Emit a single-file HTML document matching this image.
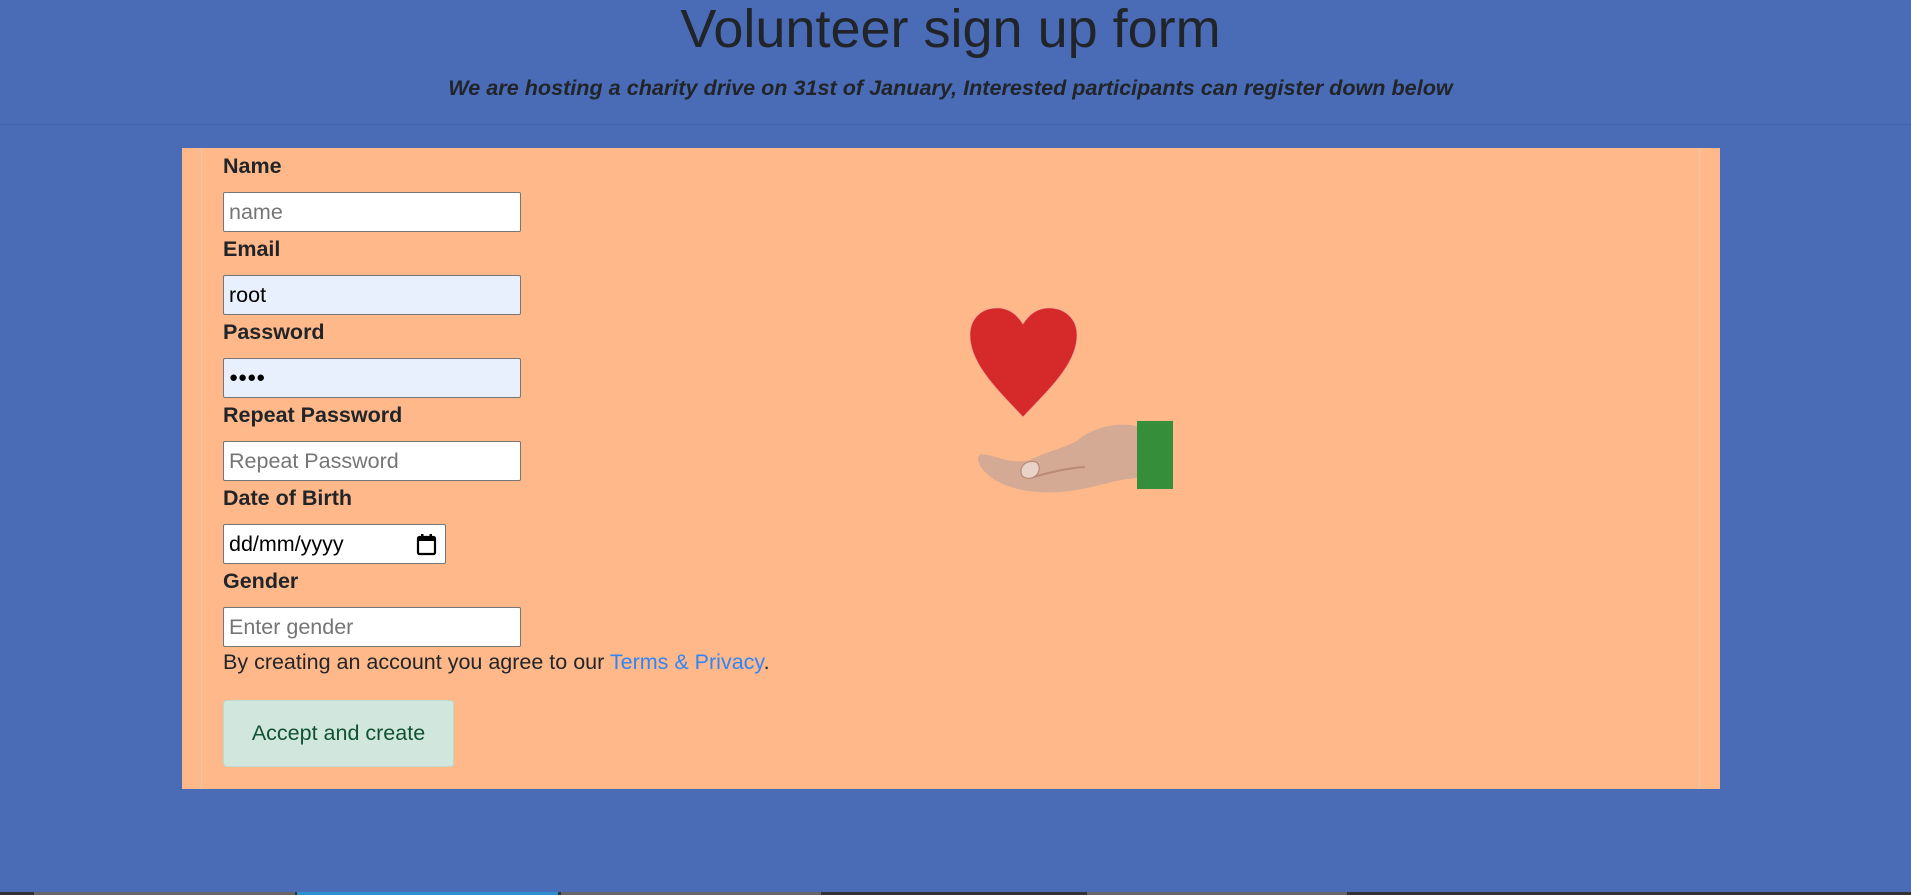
<!DOCTYPE html>
<html><head><meta charset="utf-8"><style>
*{box-sizing:border-box;margin:0;padding:0}
body{width:1911px;height:895px;background:#4a6bb5;font-family:"Liberation Sans",sans-serif;color:#212529;position:relative;overflow:hidden}
.a{position:absolute}
h1{position:absolute;left:0;width:1901px;top:-2px;text-align:center;font-weight:400;font-size:54px;line-height:62px;color:#212529}
.sub{left:0;width:1901px;top:75px;text-align:center;font-style:italic;font-weight:700;font-size:21.6px}
.hr{left:0;width:1911px;top:124px;height:1px;background:#4263a8}
.box{left:182px;top:148px;width:1538px;height:641px;background:#ffb88a}
.vl{top:148px;width:1px;height:641px;background:#e8c7b0}
label{position:absolute;left:223px;font-weight:700;font-size:21.5px;margin-top:1px}
.in{position:absolute;left:223px;width:298px;height:40px;border:1px solid #767676;border-radius:2px;background:#fff;font-size:21.5px;padding-left:5px;line-height:38px;color:#757575}
.af{background:#e8f0fe;color:#000}
.btn{left:223px;top:700px;width:231px;height:67px;background:#d1e7dd;border:1px solid #badbcc;border-radius:4px;color:#0f5132;font-size:21.5px;text-align:center;line-height:65px}
.tb{top:892px;height:3px}
</style></head><body>
<h1>Volunteer sign up form</h1>
<div class="a sub">We are hosting a charity drive on 31st of January, Interested participants can register down below</div>
<div class="a hr"></div>
<div class="a box"></div>
<div class="a vl" style="left:201px"></div>
<div class="a vl" style="left:1699px"></div>
<label style="top:153px">Name</label>
<div class="in" style="top:192px">name</div>
<label style="top:236px">Email</label>
<div class="in af" style="top:275px">root</div>
<label style="top:319px">Password</label>
<div class="in af" style="top:358px;font-size:15px">●●●●</div>
<label style="top:402px">Repeat Password</label>
<div class="in" style="top:441px">Repeat Password</div>
<label style="top:485px">Date of Birth</label>
<div class="in" style="top:524px;width:223px;color:#000">dd/mm/yyyy
<svg class="a" style="left:192px;top:8px" width="22" height="24" viewBox="0 0 22 24"><rect x="2" y="4" width="17" height="17" rx="1.5" fill="none" stroke="#000" stroke-width="2.2"/><rect x="2" y="4" width="17" height="4" fill="#000"/><rect x="5" y="1" width="2.5" height="4" fill="#000"/><rect x="13.5" y="1" width="2.5" height="4" fill="#000"/></svg></div>
<label style="top:568px">Gender</label>
<div class="in" style="top:607px">Enter gender</div>
<div class="a" style="left:223px;top:650px;font-size:21.5px">By creating an account you agree to our <span style="color:#2f86f6">Terms &amp; Privacy</span>.</div>
<div class="a btn">Accept and create</div>
<svg class="a" style="left:960px;top:300px" width="220" height="200" viewBox="960 300 220 200">
<path d="M1023 417 C1000 392 970 365 970 335 C970 318 982 308 997 308 C1010 308 1018 316 1023 324 C1028 316 1036 308 1049 308 C1064 308 1077 318 1077 335 C1077 365 1046 392 1023 417 Z" fill="#d62a2a" stroke="#f0a0a0" stroke-width="0.6"/>
<path d="M1137 426 L1130 425 C1110 423 1090 430 1078 440 C1065 448 1045 452 1030 460 C1010 465 995 455 982 454 C975 455 978 465 985 472 C1000 488 1030 494 1060 492 C1090 490 1110 480 1137 478 Z" fill="#d4aa94"/>
<path d="M1030 478 C1050 472 1070 468 1085 467" stroke="#b98a76" stroke-width="2" fill="none"/>
<path d="M1021 470 C1022 463 1030 460 1036 462 C1041 465 1040 474 1034 477 C1028 480 1020 478 1021 470 Z" fill="#ead2c6" stroke="#b98a76" stroke-width="1.2"/>
<rect x="1137" y="421" width="36" height="68" fill="#358f3a"/>
</svg>
<div class="a tb" style="left:0;width:1911px;background:#333"></div>
<div class="a tb" style="left:34px;width:261px;background:#666"></div>
<div class="a tb" style="left:297px;width:261px;background:#2c8fd0"></div>
<div class="a tb" style="left:561px;width:260px;background:#666"></div>
<div class="a tb" style="left:1087px;width:260px;background:#666"></div>
</body></html>
